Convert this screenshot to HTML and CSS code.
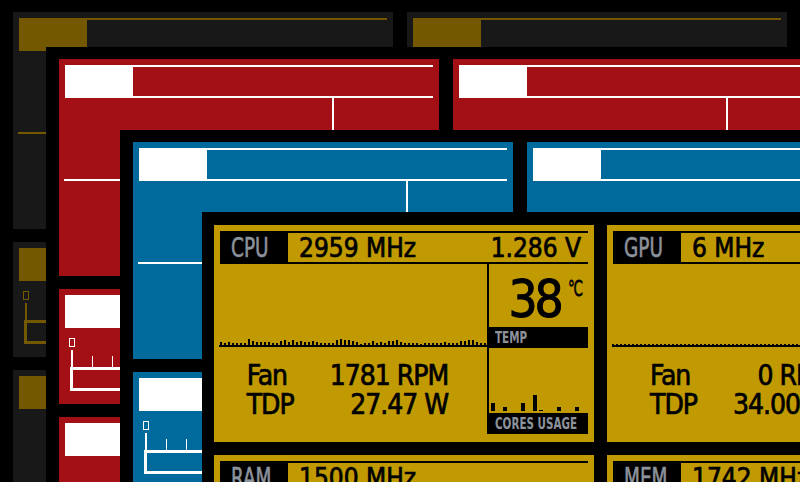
FILE: index.html
```html
<!DOCTYPE html>
<html lang="en">
<head>
<meta charset="utf-8">
<title>Hardware monitor</title>
<link rel="stylesheet" href="styles.css">
</head>
<body>

<div class="layer l1 t-dark">
  <section class="panel"><header class="hdr"><span class="tag"></span><div class="vals"></div></header><div class="body"><div class="main"><div class="graph"></div></div><div class="side"><div class="temp"></div><div class="cap"></div><div class="cores"></div><div class="cap"></div></div></div></section>
  <section class="panel"><header class="hdr"><span class="tag"></span><div class="vals"></div></header><div class="body"><div class="main"><div class="graph"></div></div><div class="side"><div class="temp"></div><div class="cap"></div><div class="cores"></div><div class="cap"></div></div></div></section>
  <section class="panel"><header class="hdr"><span class="tag"></span><div class="vals"></div></header><div class="mem"><i class="ico"></i><div class="scale"><i></i><i></i><i></i><i></i><i></i><i></i></div><div class="bar"></div></div></section>
  <section class="panel"><header class="hdr"><span class="tag"></span><div class="vals"></div></header><div class="mem"><i class="ico"></i><div class="scale"><i></i><i></i><i></i><i></i><i></i><i></i></div><div class="bar"></div></div></section>
  <section class="panel"><header class="hdr"><span class="tag"></span><div class="vals"></div></header></section>
  <section class="panel"><header class="hdr"><span class="tag"></span><div class="vals"></div></header></section>
</div>

<div class="layer l2 t-red">
  <section class="panel"><header class="hdr"><span class="tag"></span><div class="vals"></div></header><div class="body"><div class="main"><div class="graph"></div></div><div class="side"><div class="temp"></div><div class="cap"></div><div class="cores"></div><div class="cap"></div></div></div></section>
  <section class="panel"><header class="hdr"><span class="tag"></span><div class="vals"></div></header><div class="body"><div class="main"><div class="graph"></div></div><div class="side"><div class="temp"></div><div class="cap"></div><div class="cores"></div><div class="cap"></div></div></div></section>
  <section class="panel"><header class="hdr"><span class="tag"></span><div class="vals"></div></header><div class="mem"><i class="ico"></i><div class="scale"><i></i><i></i><i></i><i></i><i></i><i></i></div><div class="bar"></div></div></section>
  <section class="panel"><header class="hdr"><span class="tag"></span><div class="vals"></div></header><div class="mem"><i class="ico"></i><div class="scale"><i></i><i></i><i></i><i></i><i></i><i></i></div><div class="bar"></div></div></section>
  <section class="panel"><header class="hdr"><span class="tag"></span><div class="vals"></div></header></section>
  <section class="panel"><header class="hdr"><span class="tag"></span><div class="vals"></div></header></section>
</div>

<div class="layer l3 t-blue">
  <section class="panel"><header class="hdr"><span class="tag"></span><div class="vals"></div></header><div class="body"><div class="main"><div class="graph"></div></div><div class="side"><div class="temp"></div><div class="cap"></div><div class="cores"></div><div class="cap"></div></div></div></section>
  <section class="panel"><header class="hdr"><span class="tag"></span><div class="vals"></div></header><div class="body"><div class="main"><div class="graph"></div></div><div class="side"><div class="temp"></div><div class="cap"></div><div class="cores"></div><div class="cap"></div></div></div></section>
  <section class="panel"><header class="hdr"><span class="tag"></span><div class="vals"></div></header><div class="mem"><i class="ico"></i><div class="scale"><i></i><i></i><i></i><i></i><i></i><i></i></div><div class="bar"></div></div></section>
  <section class="panel"><header class="hdr"><span class="tag"></span><div class="vals"></div></header><div class="mem"><i class="ico"></i><div class="scale"><i></i><i></i><i></i><i></i><i></i><i></i></div><div class="bar"></div></div></section>
  <section class="panel"><header class="hdr"><span class="tag"></span><div class="vals"></div></header></section>
  <section class="panel"><header class="hdr"><span class="tag"></span><div class="vals"></div></header></section>
</div>

<div class="layer l4 t-gold">
  <section class="panel">
    <header class="hdr"><span class="tag"><b>CPU</b></span><div class="vals"><span>2959 MHz</span><span>1.286 V</span></div></header>
    <div class="body">
      <div class="main">
        <div class="graph"><svg width="267" height="8" viewBox="0 0 267 8"><path d="M1 8h2v-3h-2zm4 0h2v-2h-2zm4 0h2v-3h-2zm4 0h2v-2h-2zm4 0h2v-2h-2zm4 0h2v-2h-2zm4 0h2v-2h-2zm4 0h2v-6h-2zm4 0h2v-4h-2zm4 0h2v-3h-2zm4 0h2v-3h-2zm4 0h2v-3h-2zm4 0h2v-3h-2zm4 0h2v-2h-2zm4 0h2v-2h-2zm4 0h2v-4h-2zm4 0h2v-5h-2zm4 0h2v-3h-2zm4 0h2v-5h-2zm4 0h2v-3h-2zm4 0h2v-4h-2zm4 0h2v-3h-2zm4 0h2v-3h-2zm4 0h2v-4h-2zm4 0h2v-3h-2zm4 0h2v-2h-2zm4 0h2v-2h-2zm4 0h2v-2h-2zm4 0h2v-2h-2zm4 0h2v-5h-2zm4 0h2v-6h-2zm4 0h2v-5h-2zm4 0h2v-5h-2zm4 0h2v-4h-2zm4 0h2v-3h-2zm4 0h2v-1h-2zm4 0h2v-2h-2zm4 0h2v-2h-2zm4 0h2v-4h-2zm4 0h2v-2h-2zm4 0h2v-3h-2zm4 0h2v-2h-2zm4 0h2v-4h-2zm4 0h2v-4h-2zm4 0h2v-5h-2zm4 0h2v-3h-2zm4 0h2v-2h-2zm4 0h2v-2h-2zm4 0h2v-2h-2zm4 0h2v-2h-2zm4 0h2v-1h-2zm4 0h2v-2h-2zm4 0h2v-2h-2zm4 0h2v-2h-2zm4 0h2v-2h-2zm4 0h2v-2h-2zm4 0h2v-3h-2zm4 0h2v-2h-2zm4 0h2v-2h-2zm4 0h2v-2h-2zm4 0h2v-4h-2zm4 0h2v-4h-2zm4 0h2v-5h-2zm4 0h2v-5h-2zm4 0h2v-3h-2zm4 0h2v-2h-2zm4 0h2v-2h-2z"/></svg></div>
        <div class="stats"><span>Fan</span><span class="v">1781 RPM</span><span>TDP</span><span class="v">27.47 W</span></div>
      </div>
      <div class="side">
        <div class="temp"><span class="num">38</span><span class="unit">℃</span></div>
        <div class="cap"><b>TEMP</b></div>
        <div class="cores"><svg width="99" height="65" viewBox="0 0 99 65"><path d="M2 63h4v-8h-4zM14 63h4v-4h-4zM32 63h4v-8h-4zM44 63h4v-16h-4zM50 63h4v-1h-4zM68 63h4v-4h-4zM86 63h4v-4h-4z"/></svg></div>
        <div class="cap"><b>CORES USAGE</b></div>
      </div>
    </div>
  </section>
  <section class="panel">
    <header class="hdr"><span class="tag"><b>GPU</b></span><div class="vals"><span>6 MHz</span><span>0.650 V</span></div></header>
    <div class="body">
      <div class="main">
        <div class="graph"><div class="dots"></div></div>
        <div class="stats"><span>Fan</span><span class="v">0 RPM</span><span>TDP</span><span class="v">34.00 W</span></div>
      </div>
      <div class="side">
        <div class="temp"><span class="num">41</span><span class="unit">℃</span></div>
        <div class="cap"><b>TEMP</b></div>
        <div class="cores"></div>
        <div class="cap"><b>LOAD</b></div>
      </div>
    </div>
  </section>
  <section class="panel">
    <header class="hdr"><span class="tag"><b>RAM</b></span><div class="vals"><span>1500 MHz</span></div></header>
    <div class="mem"><i class="ico"></i><div class="scale"><i></i><i></i><i></i><i></i><i></i><i></i></div><div class="bar"></div></div>
  </section>
  <section class="panel">
    <header class="hdr"><span class="tag"><b>MEM</b></span><div class="vals"><span>1742 MHz</span></div></header>
    <div class="mem"><i class="ico"></i><div class="scale"><i></i><i></i><i></i><i></i><i></i><i></i></div><div class="bar"></div></div>
  </section>
  <section class="panel"><header class="hdr"><span class="tag"><b>SSD</b></span><div class="vals"></div></header></section>
  <section class="panel"><header class="hdr"><span class="tag"><b>NET</b></span><div class="vals"></div></header></section>
</div>

</body>
</html>
```

FILE: styles.css
```css
* { box-sizing: border-box; margin: 0; padding: 0; }

html, body {
  width: 800px;
  height: 482px;
  overflow: hidden;
  background: #000;
}

body {
  position: relative;
  font-family: "DejaVu Sans", "Liberation Sans", sans-serif;
  font-stretch: condensed;
}

/* stacked dashboard layers (windows over one another) */
.layer {
  position: absolute;
  right: 0;
  bottom: 0;
  overflow: hidden;
  background: #000;
  display: grid;
  grid-template-columns: 380px 380px;
  grid-template-rows: 217px 115px 115px;
  column-gap: 14px;
  row-gap: 13px;
  align-content: start;
  padding: 12px 0 0 13px;
}
.l1 { top: 0; left: 0; }
.l2 { top: 47px; left: 46px; }
.l3 { top: 130px; left: 120px; }
.l4 { top: 212px; left: 202px; padding: 13px 0 0 12px; column-gap: 13px; }

.t-dark { --bg: #181818; --fg: #735800; --ink: transparent; --lbl: transparent; }
.t-red  { --bg: #a20f14; --fg: #ffffff; --ink: transparent; --lbl: transparent; }
.t-blue { --bg: #006a9c; --fg: #ffffff; --ink: transparent; --lbl: transparent; }
.t-gold { --bg: #c09a00; --fg: #000000; --ink: #000000; --lbl: #8d939c; }

.panel {
  background: var(--bg);
  color: var(--ink);
  padding: 6px 6px 0 6px;
  display: flex;
  flex-direction: column;
  min-width: 0;
}

/* header row */
.hdr {
  display: flex;
  height: 33px;
  flex: none;
}
.tag {
  width: 68px;
  flex: none;
  background: var(--fg);
  color: var(--lbl);
  display: flex;
  align-items: center;
  padding-left: 11px;
  overflow: hidden;
  font-size: 27px;
  line-height: 1;
}
.tag b {
  font-weight: normal;
  display: inline-block;
  transform: scaleX(0.76);
  transform-origin: left center;
  -webkit-text-stroke: 0.6px var(--lbl);
}
.vals {
  flex: 1;
  border-top: 2px solid var(--fg);
  border-bottom: 2px solid var(--fg);
  display: flex;
  justify-content: space-between;
  align-items: center;
  padding: 0 7px 0 11px;
  font-size: 26px;
  line-height: 1;
  white-space: nowrap;
  -webkit-text-stroke: 0.7px var(--ink);
}

/* CPU / GPU body */
.body {
  display: flex;
  height: 170px;
}
.main {
  flex: 1;
  display: flex;
  flex-direction: column;
}
.graph {
  height: 83px;
  margin-left: -1px;
  border-bottom: 2px solid var(--fg);
  display: flex;
  align-items: flex-end;
}
.graph svg { display: block; fill: var(--fg); }
.dots {
  width: 100%;
  height: 1px;
  background: repeating-linear-gradient(90deg, var(--fg) 0 2px, transparent 2px 4px);
}
.stats {
  display: grid;
  grid-template-columns: auto auto;
  column-gap: 36px;
  justify-content: center;
  padding: 14px 12px 0 0;
  font-size: 28px;
  line-height: 29px;
  letter-spacing: -1px;
  white-space: nowrap;
  -webkit-text-stroke: 0.7px var(--ink);
}
.stats .v { text-align: right; }

.side {
  width: 101px;
  flex: none;
  border-left: 2px solid var(--fg);
  display: flex;
  flex-direction: column;
}
.temp {
  height: 63px;
  display: flex;
  justify-content: flex-end;
  align-items: flex-start;
  padding: 10px 5px 0 0;
}
.temp .num {
  font-size: 51px;
  line-height: 51px;
  letter-spacing: -3px;
  -webkit-text-stroke: 1px var(--ink);
}
.temp .unit {
  display: inline-block;
  font-size: 22px;
  line-height: 22px;
  margin: 4px 0 0 0;
  transform: scaleX(0.68);
  transform-origin: right top;
  -webkit-text-stroke: 0.6px var(--ink);
}
.cap {
  height: 21px;
  flex: none;
  background: var(--fg);
  color: var(--lbl);
  display: flex;
  align-items: center;
  padding-left: 6px;
  font-size: 16px;
  line-height: 1;
  white-space: nowrap;
  overflow: hidden;
}
.cap b {
  display: inline-block;
  transform: scaleX(0.72);
  transform-origin: left center;
}
.cores {
  height: 65px;
  display: flex;
  align-items: flex-end;
}
.cores svg { display: block; fill: var(--fg); }

/* memory panels */
.mem {
  display: flex;
  flex-direction: column;
  align-items: flex-start;
}
.ico {
  display: block;
  width: 6px;
  height: 9px;
  border: 1px solid var(--fg);
  margin: 10px 0 3px 4px;
}
.scale {
  display: flex;
  align-items: flex-end;
  height: 17px;
  margin-left: 6px;
}
.scale i {
  display: block;
  width: 1px;
  height: 11px;
  background: var(--fg);
  margin-left: 19px;
}
.scale i:first-child {
  width: 2px;
  height: 17px;
  margin-left: 0;
}
.bar {
  width: 250px;
  height: 24px;
  border: 3px solid var(--fg);
  margin-left: 5px;
}
```
